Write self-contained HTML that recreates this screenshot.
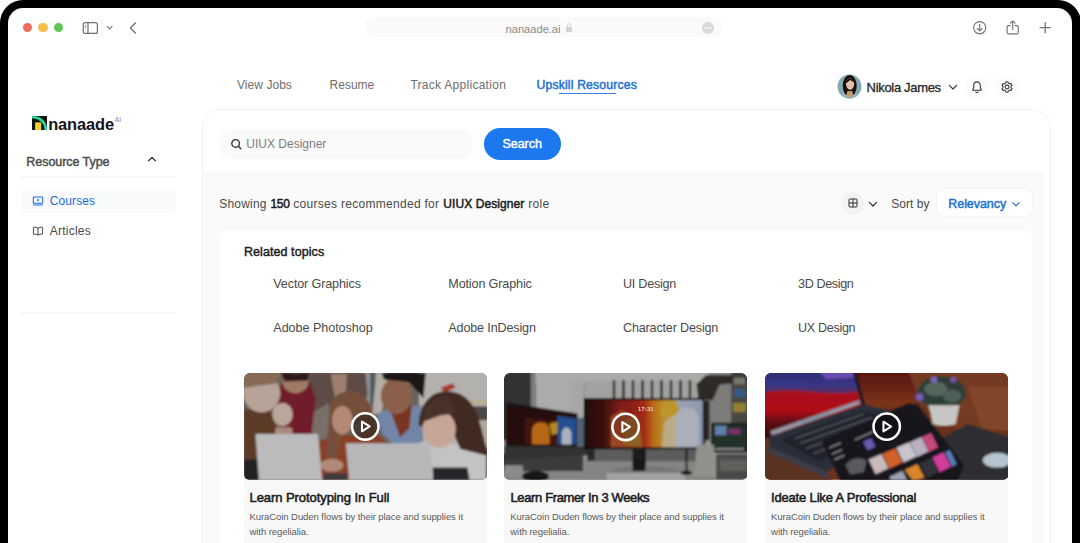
<!DOCTYPE html>
<html lang="en">
<head>
<meta charset="utf-8">
<title>nanaade.ai – Upskill Resources</title>
<style>
*{box-sizing:border-box;margin:0;padding:0}
html,body{width:1080px;height:543px;overflow:hidden;background:#fff}
body{position:relative;font-family:"Liberation Sans",sans-serif;font-size:12px;color:#222}
.abs{position:absolute}
.t{position:absolute;white-space:nowrap;line-height:1}
.frame{position:absolute;left:0;top:0;width:1081px;height:620px;background:#000;border-radius:23px}
.screen{position:absolute;left:8px;top:8px;width:1064px;height:620px;background:#fff;border-radius:15px;overflow:hidden}
/* everything inside .screen is positioned in page coordinates via this shim */
.page{position:absolute;left:-8px;top:-8px;width:1080px;height:543px}
.dot{position:absolute;width:9.2px;height:9.2px;border-radius:50%;top:23.3px}
.urlbar{left:366px;top:17px;width:355px;height:20px;border-radius:6px;background:#fafafa}
.nav{color:#6e6e6e;font-size:12px;top:79px}
.panel{left:202px;top:108.500px;width:849px;height:500px;border:1px solid #f2f2f2;border-radius:19px;background:#fff;overflow:hidden}
.greyarea{left:204px;top:172px;width:840px;height:400px;background:#fafafa}
.sh{top:198.100px;font-size:12px;color:#4a4a4a}
.shb{color:#1c1c1c;-webkit-text-stroke:0.500px #1c1c1c}
.topic{font-size:12.600px;color:#4a4a4a}
.card{position:absolute;top:373px;width:243px;height:200px;background:#f8f8f9;border-radius:6px;overflow:hidden}
.card svg{position:absolute;left:0;top:0}
.ctitle{font-size:13px;color:#1c1c1c;-webkit-text-stroke:0.550px #1c1c1c}
.cdesc{font-size:9.5px;color:#5a5a5a;letter-spacing:-0.07px}
</style>
</head>
<body>
<div class="frame"></div>
<div class="screen"><div class="page">

<!-- ===== browser chrome ===== -->
<div class="dot" style="left:23.2px;background:#ed6a5e"></div>
<div class="dot" style="left:38.4px;background:#f4bf4f"></div>
<div class="dot" style="left:53.5px;background:#61c554"></div>

<svg class="abs" style="left:80px;top:18px" width="64" height="20" viewBox="0 0 64 20" fill="none" stroke="#6f6f6f" stroke-width="1.2" stroke-linecap="round" stroke-linejoin="round">
  <rect x="3.2" y="4.6" width="14.2" height="10.8" rx="2"/>
  <line x1="8" y1="4.6" x2="8" y2="15.4"/>
  <line x1="5.4" y1="7.4" x2="5.4" y2="9.6" stroke-width="0.8"/>
  <line x1="22.2" y1="2" x2="22.2" y2="18" stroke="#ececec" stroke-width="1"/>
  <polyline points="27.2,8.4 29.6,10.8 32,8.4" stroke-width="1.1"/>
  <polyline points="55.4,5 50.4,10 55.4,15" stroke-width="1.3"/>
</svg>

<div class="abs urlbar"></div>
<div class="t" style="left:505.600px;top:23.500px;font-size:11.200px;color:#8a8a8a;letter-spacing:-0.050px">nanaade.ai</div>
<svg class="abs" style="left:564px;top:22px" width="10" height="12" viewBox="0 0 10 12">
  <rect x="2" y="5" width="6" height="5" rx="1" fill="#d2d2d2"/>
  <path d="M3.2 5.2V3.6a1.8 1.8 0 0 1 3.6 0V5.2" fill="none" stroke="#d2d2d2" stroke-width="1"/>
</svg>
<div class="abs" style="left:702px;top:21.6px;width:12px;height:12px;border-radius:50%;background:#d9d9d9"></div>
<div class="abs" style="left:705px;top:27px;width:1.6px;height:1.6px;border-radius:50%;background:#f6f6f6;box-shadow:2.4px 0 0 #f6f6f6,4.8px 0 0 #f6f6f6"></div>

<svg class="abs" style="left:970px;top:16px" width="90" height="24" viewBox="0 0 90 24" fill="none" stroke="#747474" stroke-width="1.15" stroke-linecap="round" stroke-linejoin="round">
  <circle cx="9.7" cy="11.7" r="6.1"/>
  <path d="M9.7 8.2v6.4M7.2 12.3l2.5 2.5 2.5-2.5"/>
  <path d="M40.4 9.6h-2.1a1.2 1.2 0 0 0-1.2 1.2v5.8a1.2 1.2 0 0 0 1.2 1.2h8.8a1.2 1.2 0 0 0 1.2-1.2v-5.8a1.2 1.2 0 0 0-1.2-1.2h-2.1"/>
  <path d="M42.7 13.6V5.2M40.4 7.2l2.3-2.3 2.3 2.3"/>
  <path d="M75.2 6.6v10.2M70.1 11.7h10.2" stroke-width="1.3"/>
</svg>

<!-- ===== top navigation ===== -->
<div class="t nav" style="left:237px;letter-spacing:0.05px">View Jobs</div>
<div class="t nav" style="left:329.6px">Resume</div>
<div class="t nav" style="left:410.4px;letter-spacing:0.28px">Track Application</div>
<div class="t nav" style="left:536.500px;top:78.700px;font-size:12.200px;color:#1b6fd6;letter-spacing:0.170px;-webkit-text-stroke:0.450px #1b6fd6">Upskill Resources</div>
<div class="abs" style="left:558.600px;top:92.800px;width:57px;height:1.100px;background:#3a80e0"></div>

<!-- user -->
<svg class="abs" style="left:836.500px;top:74.200px" width="25" height="25" viewBox="0 0 25 25">
  <defs><clipPath id="avc"><circle cx="12.5" cy="12.5" r="12"/></clipPath></defs>
  <g clip-path="url(#avc)">
    <rect width="25" height="25" fill="#86aab3"/>
    <path d="M3 25c0-4 3-6.500 9.500-6.500s9.500 2.500 9.500 6.500z" fill="#8fb6c6"/>
    <ellipse cx="12.700" cy="11.800" rx="7" ry="10.800" fill="#17110f"/>
    <path d="M10.500 17h4.600l1.400 4.500-3.700 3-3.700-3z" fill="#c49a70"/>
    <ellipse cx="13.100" cy="10" rx="4.100" ry="5.700" fill="#e2c0aa"/>
    <path d="M8.600 9.500c.5-4 4-6 6.500-4.500 1.500.5 2.300 2 2.500 4-1.500-1.500-3-2.500-4.500-3-1.500 1.500-3 2.500-4.500 3.500z" fill="#17110f"/>
    </g>
</svg>
<div class="t" style="left:866.6px;top:81px;font-size:13px;color:#262626;letter-spacing:-0.320px;-webkit-text-stroke:0.3px #262626">Nikola James</div>
<svg class="abs" style="left:946.400px;top:80px" width="14" height="14" viewBox="0 0 14 14" fill="none" stroke="#3a3a3a" stroke-width="1.2" stroke-linecap="round" stroke-linejoin="round"><polyline points="3.4,5.4 7,9 10.600,5.400"/></svg>
<div class="abs" style="left:965px;top:75px;width:24px;height:24px;border-radius:50%;background:#fbfbfb"></div>
<div class="abs" style="left:994.600px;top:75px;width:24px;height:24px;border-radius:50%;background:#fbfbfb"></div>
<svg class="abs" style="left:970px;top:80px" width="14" height="14" viewBox="0 0 14 14" fill="none" stroke="#3a3a3a" stroke-width="1.1" stroke-linecap="round" stroke-linejoin="round">
  <path d="M7 1.900c-2 0-3.300 1.500-3.300 3.500v2.500L2.700 9.700v.5h8.600v-.5l-1-1.800V5.400c0-2-1.300-3.500-3.300-3.500z"/><path d="M5.800 11.900a1.300 1.300 0 0 0 2.400 0"/>
</svg>
<svg class="abs" style="left:999.800px;top:80px" width="14" height="14" viewBox="0 0 14 14" fill="none" stroke="#3a3a3a" stroke-width="1.1" stroke-linejoin="round">
  <path d="M5.95 1.81 L8.05 1.81 L8.29 3.11 L9.73 3.94 L10.97 3.49 L12.02 5.31 L11.02 6.17 L11.02 7.83 L12.02 8.69 L10.97 10.51 L9.73 10.06 L8.29 10.89 L8.05 12.19 L5.95 12.19 L5.71 10.89 L4.27 10.06 L3.03 10.51 L1.98 8.69 L2.98 7.83 L2.98 6.17 L1.98 5.31 L3.03 3.49 L4.27 3.94 L5.71 3.11z"/>
  <circle cx="7" cy="7" r="1.900"/>
</svg>

<!-- ===== sidebar ===== -->
<svg class="abs" style="left:31.500px;top:116.400px" width="15.400" height="14" viewBox="0 0 15.400 14">
  <rect width="15.400" height="14" fill="#101410"/>
  <path d="M0 0H1.400A14 14 0 0 1 15.400 14H12.500A11.400 11.400 0 0 0 0 2.600z" fill="#2fd097"/>
  <rect x="3.100" y="6.400" width="6.100" height="7.600" fill="#f3d02c"/>
</svg>
<div class="t" style="left:48.200px;top:115.600px;font-size:16.400px;font-weight:bold;color:#14141c;letter-spacing:-0.1px">nanaade</div>
<div class="t" style="left:114.800px;top:116.800px;font-size:6.600px;color:#8a8a8a">AI</div>

<div class="t" style="left:26.300px;top:155.600px;font-size:12.500px;color:#4c4c4c;letter-spacing:-0.050px;-webkit-text-stroke:0.450px #4c4c4c">Resource Type</div>
<svg class="abs" style="left:145px;top:152px" width="14" height="14" viewBox="0 0 14 14" fill="none" stroke="#333" stroke-width="1.3" stroke-linecap="round" stroke-linejoin="round"><polyline points="3.600,8.800 7,5.400 10.400,8.800"/></svg>
<div class="abs" style="left:20.500px;top:175.800px;width:155.200px;height:2px;background:#f7f7f7"></div>

<div class="abs" style="left:20.500px;top:189px;width:155.200px;height:23.700px;border-radius:4px;background:#f9fafc"></div>
<svg class="abs" style="left:32px;top:195px" width="12" height="12" viewBox="0 0 12 12" fill="none" stroke="#1b6fd6" stroke-width="1.050" stroke-linejoin="round" stroke-linecap="round">
  <rect x="1.300" y="1.900" width="9.400" height="6.400" rx="0.800"/><path d="M1.600 9.900h8.800"/><path d="M5.200 3.800l2.200 1.300-2.200 1.300z" fill="#1b6fd6" stroke="none"/>
</svg>
<div class="t" style="left:49.800px;top:194.900px;font-size:12px;color:#1b6fd6;letter-spacing:0.080px">Courses</div>

<svg class="abs" style="left:32px;top:224.500px" width="12" height="12" viewBox="0 0 12 12" fill="none" stroke="#4a4a4a" stroke-width="1" stroke-linejoin="round" stroke-linecap="round">
  <path d="M6 3.200C5 2.300 3.400 2.100 1.400 2.300v6.900c2-.2 3.600 0 4.600.900 1-.900 2.600-1.100 4.600-.900V2.300C8.600 2.100 7 2.300 6 3.200zM6 3.200v6.900"/>
</svg>
<div class="t" style="left:49.800px;top:224.500px;font-size:12px;color:#4a4a4a;letter-spacing:0.220px">Articles</div>
<div class="abs" style="left:20.500px;top:311.800px;width:155.200px;height:2px;background:#f7f7f7"></div>

<!-- ===== main panel ===== -->
<div class="abs panel"></div>
<div class="abs greyarea"></div>

<div class="abs" style="left:220.400px;top:130.200px;width:251.800px;height:28.600px;border-radius:9px;background:#fafafb"></div>
<svg class="abs" style="left:230px;top:138px" width="12" height="12" viewBox="0 0 12 12" fill="none" stroke="#333" stroke-width="1.400" stroke-linecap="round"><circle cx="5.600" cy="5.400" r="3.800"/><path d="M8.300 8.300l2.500 2.500"/></svg>
<div class="t" style="left:246.300px;top:138.200px;font-size:12px;color:#7d7d7d">UIUX Designer</div>
<div class="abs" style="left:484.400px;top:128.300px;width:76.200px;height:31.500px;border-radius:16px;background:#1b78ee"></div>
<div class="t" style="left:502.500px;top:137.900px;font-size:12.500px;color:#fff;letter-spacing:-0.050px;-webkit-text-stroke:0.450px #fff">Search</div>

<div class="t sh" style="left:219.300px;letter-spacing:0.200px">Showing</div>
<div class="t sh shb" style="left:270.600px;letter-spacing:-0.400px">150</div>
<div class="t sh" style="left:293.300px;letter-spacing:0.290px">courses recommended for</div>
<div class="t sh shb" style="left:443.300px;letter-spacing:0.070px">UIUX Designer</div>
<div class="t sh" style="left:528.300px;letter-spacing:0.250px">role</div>

<div class="abs" style="left:841.300px;top:191.800px;width:23px;height:23px;border-radius:50%;background:#f2f2f3"></div>
<svg class="abs" style="left:847.800px;top:198.300px" width="10" height="10" viewBox="0 0 10 10" fill="none" stroke="#2a2a2a" stroke-width="1"><rect x="1" y="1" width="8" height="8" rx="0.900"/><path d="M5 1v8M1 5h8"/></svg>
<svg class="abs" style="left:866px;top:196.500px" width="14" height="14" viewBox="0 0 14 14" fill="none" stroke="#2f2f2f" stroke-width="1.200" stroke-linecap="round" stroke-linejoin="round"><polyline points="3.400,5.400 7,9 10.600,5.400"/></svg>
<div class="t" style="left:891.200px;top:197.700px;font-size:12px;color:#4a4a4a;letter-spacing:0.040px">Sort by</div>
<div class="abs" style="left:936.200px;top:188.200px;width:97.200px;height:29.200px;border-radius:8px;background:#fff;border:1px solid #f3f3f3"></div>
<div class="t" style="left:948.300px;top:197.500px;font-size:12.500px;color:#1b6fd6;letter-spacing:-0.060px;-webkit-text-stroke:0.450px #1b6fd6">Relevancy</div>
<svg class="abs" style="left:1009.200px;top:196.500px" width="14" height="14" viewBox="0 0 14 14" fill="none" stroke="#1b6fd6" stroke-width="1.100" stroke-linecap="round" stroke-linejoin="round"><polyline points="3.800,5.600 7,8.800 10.200,5.600"/></svg>

<!-- related topics card -->
<div class="abs" style="left:219.600px;top:229.800px;width:812.400px;height:340px;border-radius:7px;background:#fff"></div>
<div class="t" style="left:243.900px;top:246.100px;font-size:12.500px;color:#1c1c1c;letter-spacing:0.080px;-webkit-text-stroke:0.450px #1c1c1c">Related topics</div>
<div class="t topic" style="left:273.300px;top:277.900px;letter-spacing:-0.137px">Vector Graphics</div>
<div class="t topic" style="left:448.300px;top:277.900px;letter-spacing:-0.140px">Motion Graphic</div>
<div class="t topic" style="left:623px;top:277.900px;letter-spacing:-0.260px">UI Design</div>
<div class="t topic" style="left:798px;top:277.900px;letter-spacing:-0.370px">3D Design</div>
<div class="t topic" style="left:273.300px;top:321.500px;letter-spacing:-0.050px">Adobe Photoshop</div>
<div class="t topic" style="left:448.300px;top:321.500px;letter-spacing:-0.150px">Adobe InDesign</div>
<div class="t topic" style="left:623px;top:321.500px;letter-spacing:-0.175px">Character Design</div>
<div class="t topic" style="left:798px;top:321.500px;letter-spacing:-0.330px">UX Design</div>

<!-- course cards -->
<div class="card" style="left:243.600px" id="card1"><!--IMG1--><svg width="243.200" height="106.800" viewBox="15.500 20.700 1050 462" preserveAspectRatio="none">
<defs><filter id="b1" x="-5%" y="-5%" width="110%" height="110%"><feGaussianBlur stdDeviation="5"/></filter>
<clipPath id="c1"><rect x="15.500" y="20.700" width="1050" height="462" rx="22"/></clipPath></defs>
<g clip-path="url(#c1)">
<rect x="0" y="0" width="1100" height="500" fill="#6d625c"/>
<g filter="url(#b1)">
  <!-- background wall / window -->
  <rect x="520" y="10" width="110" height="150" fill="#8f9496"/>
  <rect x="560" y="10" width="22" height="150" fill="#4f5b60"/>
  <path d="M590 20h50l-10 60-20 110-40 10 10-110z" fill="#b5ada5"/>
  <rect x="770" y="10" width="310" height="330" fill="#b3b1ae"/>
  <rect x="960" y="140" width="110" height="18" fill="#b8ac8e"/>
  <rect x="970" y="165" width="100" height="60" fill="#4b4744"/>
  <rect x="1000" y="230" width="70" height="110" fill="#b3a89c"/>
  <path d="M865 85l50-20 15 18-50 22z" fill="#a8342c"/>
  <!-- man behind in jacket -->
  <path d="M300 20h240l10 90-40 120-110 60-110-10z" fill="#5f4c44"/>
  <path d="M390 25h70l-6 95-44 20z" fill="#9d7f70"/>
  <path d="M300 200l80-50 20 150-100 10z" fill="#7a6e69"/>
  <!-- boy in red -->
  <path d="M150 110l40-60 110 10 25 70-20 170-120 10z" fill="#6f1f2a"/>
  <ellipse cx="238" cy="62" rx="55" ry="46" fill="#a17a66"/>
  <path d="M178 20h120l-8 34-100 4z" fill="#2e1f1a"/>
  <!-- left boy -->
  <path d="M15 180l110-10 40 110-60 20-40 110-50 10z" fill="#5b3a27"/>
  <ellipse cx="92" cy="108" rx="80" ry="84" fill="#b8a398"/>
  <path d="M15 20h155l-14 46-141 18z" fill="#866a54"/>
  <ellipse cx="182" cy="200" rx="44" ry="50" fill="#bba69c"/>
  <rect x="150" y="255" width="75" height="40" rx="14" fill="#a88c7e"/>
  <rect x="15" y="395" width="70" height="90" fill="#232323"/>
  <!-- dark-skinned girl -->
  <path d="M585 200l60-30 140-10 5 170-120 10-60-60z" fill="#7186a6"/>
  <path d="M650 190l90-30-10 100-40 40z" fill="#7a3623"/>
  <ellipse cx="672" cy="120" rx="66" ry="78" fill="#8a604c"/>
  <path d="M610 20h190l-10 110-60-70-110-10z" fill="#1d1716"/>
  <!-- centre girl -->
  <path d="M340 320l60-30h200l40 50-30 140H345z" fill="#8a4027"/>
  <path d="M385 190c0-60 40-90 90-90s90 40 95 100l20 110-60-20-20-80-60-30-20 130-20 90-40-20z" fill="#74503a"/>
  <ellipse cx="440" cy="225" rx="44" ry="62" fill="#b48a76"/>
  <ellipse cx="395" cy="420" rx="50" ry="28" fill="#b08a78"/>
  <!-- right girl -->
  <path d="M700 340l120-30 240 40v135H700z" fill="#c4c2c2"/>
  <path d="M830 430h150l10 55H830z" fill="#26282c"/>
  <path d="M770 250c0-90 50-150 120-150 90 0 130 70 150 160l30 120-120-30-40-90z" fill="#3f2a22"/>
  <ellipse cx="858" cy="264" rx="72" ry="80" fill="#c6a696"/>
  <path d="M782 235c10-70 50-110 110-120l40 80-70 10z" fill="#49312a"/>
  <!-- laptops -->
  <path d="M65 285h270l18 200H80z" fill="#bbbbbe"/>
  <path d="M455 325h365l12 160H470z" fill="#b7b7ba"/>
  <rect x="360" y="455" width="100" height="30" fill="#3d3a3a"/>
</g>
<!-- play button -->
<circle cx="539" cy="252" r="57" fill="rgba(40,28,22,0.55)" stroke="#fff" stroke-width="11"/>
<path d="M525 231v42l33-21z" fill="none" stroke="#fff" stroke-width="9" stroke-linejoin="round"/>
</g>
</svg>
<!--/IMG1--></div>
<div class="card" style="left:504.400px" id="card2"><!--IMG2--><svg width="243.200" height="106.800" viewBox="19 20.700 1050 462" preserveAspectRatio="none">
<defs><filter id="b2" x="-5%" y="-5%" width="110%" height="110%"><feGaussianBlur stdDeviation="4"/></filter>
<clipPath id="c2"><rect x="19" y="20.700" width="1050" height="462" rx="22"/></clipPath>
<linearGradient id="scr2" x1="0" x2="1" y1="0" y2="0">
<stop offset="0" stop-color="#2c0f0e"/><stop offset="0.160" stop-color="#4a1412"/><stop offset="0.270" stop-color="#8c1f16"/><stop offset="0.400" stop-color="#a8261a"/><stop offset="0.500" stop-color="#bf341c"/><stop offset="0.580" stop-color="#d8801e"/><stop offset="0.680" stop-color="#d9ac38"/><stop offset="0.760" stop-color="#b9c0cf"/><stop offset="1" stop-color="#a3b2cc"/></linearGradient>
</defs>
<g clip-path="url(#c2)">
<rect x="0" y="0" width="1100" height="500" fill="#a6a6a4"/>
<g filter="url(#b2)">
  <rect x="140" y="10" width="760" height="50" fill="#c6c6c4"/>
  <rect x="160" y="40" width="200" height="165" fill="#c9c9c7"/>
  <rect x="300" y="55" width="60" height="160" fill="#c2c2c0"/>
  <rect x="370" y="55" width="480" height="80" fill="#bdbdbb"/>
  <!-- window blind -->
  <rect x="10" y="10" width="125" height="300" fill="#3b3b3b"/>
  <rect x="135" y="10" width="20" height="300" fill="#8e8e8c"/>
  <!-- pegboard right -->
  <rect x="890" y="40" width="120" height="200" fill="#91918d"/>
  <rect x="1000" y="10" width="80" height="230" fill="#55524a"/>
  <path d="M850 70l40-40h190v30l-130 10-30 70-60-10z" fill="#35322f"/>
  <rect x="1012" y="90" width="50" height="36" fill="#3f6a9a"/>
  <rect x="1008" y="150" width="55" height="40" fill="#a8963f"/>
  <rect x="1010" y="40" width="50" height="30" fill="#8a8a80"/>
  <rect x="872" y="140" width="34" height="170" fill="#2c2c2c"/>
  <!-- slats -->
  <g fill="#151515"><rect x="489" y="52" width="10" height="85"/><rect x="530" y="52" width="10" height="85"/><rect x="571" y="52" width="10" height="85"/><rect x="612" y="52" width="10" height="85"/><rect x="653" y="52" width="10" height="85"/><rect x="694" y="52" width="10" height="85"/><rect x="735" y="52" width="10" height="85"/><rect x="776" y="52" width="10" height="85"/><rect x="817" y="52" width="10" height="85"/></g>
  <!-- desk -->
  <rect x="10" y="392" width="1070" height="100" fill="#9a9a98"/>
  <rect x="380" y="350" width="500" height="52" fill="#6a6a6a"/>
  <rect x="10" y="370" width="350" height="75" fill="#454547"/>
  <rect x="20" y="420" width="80" height="50" fill="#a4a4a6"/>
  <ellipse cx="155" cy="468" rx="58" ry="24" fill="#161616"/>
  <!-- left laptop -->
  <path d="M28 148l308 48v150H28z" fill="#1e1716"/>
  <path d="M34 160l296 44v126H34z" fill="#2e100f"/>
  <path d="M110 215l140 12v103H110z" fill="#4f1b12"/>
  <path d="M140 330v-60c0-48 76-48 76 0v60z" fill="#d47a1c"/>
  <path d="M215 240l40-10v50l-30 10z" fill="#cf9f2a"/>
  <path d="M250 206l80 12v112h-80z" fill="#2a5aa8"/>
  <path d="M268 330v-44c0-40 42-40 42 0v44z" fill="#c9cfdc"/>
  <path d="M22 338h350l26 36-376 22z" fill="#3a3a3c"/>
  <rect x="338" y="214" width="32" height="120" fill="#5f7088"/>
  <!-- centre monitor -->
  <rect x="364" y="129" width="522" height="222" fill="#141414"/>
  <rect x="373" y="138" width="504" height="204" fill="url(#scr2)"/>
  <path d="M480 342V210l50-30 50 50 40 112z" fill="#b5522a"/><path d="M535 330l10-110 40-20 20 60 10 80z" fill="#a8742c"/>
  <path d="M690 200l20-60 50 0 20 50-40 30z" fill="#dcae30"/>
  <path d="M700 342l10-110 60-40 10 150z" fill="#d9c89a"/>
  <path d="M760 342v-120c0-70 100-70 100 0v120z" fill="#c6ccd9"/>
  <!-- stand -->
  <rect x="574" y="350" width="58" height="95" fill="#1f1f1f"/>
  <ellipse cx="630" cy="448" rx="150" ry="24" fill="#8a8a8a"/>
  <rect x="575" y="395" width="54" height="50" fill="#181818"/>
  <rect x="462" y="452" width="340" height="40" fill="#bdbdbd"/>
  <rect x="380" y="350" width="30" height="50" fill="#2c2c2c"/>
  <!-- lamp stand -->
  <rect x="803" y="350" width="8" height="100" fill="#1a1a1a"/>
  <ellipse cx="806" cy="452" rx="25" ry="9" fill="#1a1a1a"/>
  <!-- right stuff -->
  <rect x="914" y="236" width="160" height="128" fill="#1c221e"/>
  <rect x="926" y="246" width="140" height="100" fill="#2a3a34"/>
  <rect x="930" y="248" width="50" height="42" fill="#6f92c4"/>
  <rect x="990" y="262" width="50" height="24" fill="#8a3a7a"/>
  <rect x="930" y="345" width="125" height="9" fill="#9a9a9a"/>
  <path d="M852 330h72l14 140h-100z" fill="#a9a9a2"/>
  <rect x="935" y="372" width="145" height="110" fill="#565654"/>
  <rect x="950" y="395" width="120" height="50" fill="#6f6f6c"/>
<rect x="0" y="0" width="1100" height="500" fill="#000" opacity="0.140"/>
</g>
<text x="597" y="186" font-family="Liberation Sans, sans-serif" font-size="27" font-weight="bold" fill="#e9d6cf" opacity="0.900">17:31</text>
<circle cx="544" cy="254" r="57" fill="rgba(90,30,20,0.350)" stroke="#fff" stroke-width="11"/>
<path d="M530 233v42l33-21z" fill="none" stroke="#fff" stroke-width="9" stroke-linejoin="round"/>
</g>
</svg>
<!--/IMG2--></div>
<div class="card" style="left:765.200px" id="card3"><!--IMG3--><svg width="243.200" height="106.800" viewBox="22.500 20.700 1050 462" preserveAspectRatio="none">
<defs><filter id="b3" x="-5%" y="-5%" width="110%" height="110%"><feGaussianBlur stdDeviation="4"/></filter>
<clipPath id="c3"><rect x="22.500" y="20.700" width="1050" height="462" rx="22"/></clipPath>
<linearGradient id="scr3" x1="0" x2="0" y1="0" y2="1"><stop offset="0" stop-color="#2c2c70"/><stop offset="0.200" stop-color="#3a3284"/><stop offset="0.300" stop-color="#a8121c"/><stop offset="0.600" stop-color="#b01018"/><stop offset="0.780" stop-color="#5a0c12"/><stop offset="1" stop-color="#2e090d"/></linearGradient>
<linearGradient id="glow3" x1="0" x2="0" y1="0" y2="1"><stop offset="0" stop-color="#581611"/><stop offset="0.500" stop-color="#6a2414"/><stop offset="1" stop-color="#803816"/></linearGradient>
</defs>
<g clip-path="url(#c3)">
<rect x="0" y="0" width="1100" height="500" fill="#6a321d"/>
<g filter="url(#b3)">
  <!-- table glow -->
  <path d="M400 10h300l-40 150-220 10z" fill="url(#glow3)"/>
  <path d="M640 10h440v260l-200 10-180-120z" fill="#743a20"/><path d="M900 80h180v190l-120 -10z" fill="#82462a"/>
  <path d="M10 330l300 140v30H10z" fill="#5a3020"/>
  <!-- laptop screen -->
  <path d="M10 10h395l45 145L40 300 10 300z" fill="url(#scr3)"/>
  <path d="M250 10h150l8 30-120 8z" fill="#6a4cb2"/>
  <path d="M10 60c120-30 260 30 410 0l10 40c-150 30-290-30-420 10z" fill="#2f3a8a" opacity="0.700"/>
  <path d="M45 272l385-135 6 16L52 292z" fill="#8a8a9a"/>
  <path d="M400 10l16 0 40 150-16 6z" fill="#1a1a20"/>
  <!-- laptop base -->
  <path d="M40 300l410-145 160 45-320 250-250-110z" fill="#2b2f3b"/>
  <path d="M90 310l350-125 110 30-290 190z" fill="#20222a"/>
  <path d="M40 340l250 110 10 30-270-120z" fill="#3a3e4a"/>
  <g stroke="#5b5f6b" stroke-width="7" fill="none" opacity="0.800"><path d="M150 305l300-108"/><path d="M175 325l310-112"/><path d="M200 347l320-116"/><path d="M230 370l310-118"/></g>
  <g stroke-width="5" fill="none" opacity="0.750"><path d="M60 278l120-42" stroke="#c9a9b9"/><path d="M180 236l120-42" stroke="#6fa8b8"/><path d="M300 194l120-42" stroke="#b4b4c4"/></g>
  <!-- felt mat -->
  <path d="M770 310l130-70 180 60v200H870z" fill="#2d2d30"/>
  <!-- tablet -->
  <path d="M268 318l375-168 40 10 200 260-30 70H350z" fill="#18181b"/>
  <path d="M446 318l34-15 20 36-34 17z" fill="#6a5ab0"/>
  <g>
   <path d="M470 395l56-24 30 62-56 26z" fill="#c9b9b9"/>
   <path d="M530 370l56-24 30 62-56 26z" fill="#d2602a"/>
   <path d="M590 344l56-24 30 62-56 26z" fill="#c8c4cc"/>
   <path d="M648 320l50-22 30 62-50 24z" fill="#b9b0c4"/>
   <path d="M700 298l40-18 30 62-40 20z" fill="#c44a7a"/>
   <path d="M560 470l56-26 20 40h-70z" fill="#9aa0b0"/>
   <path d="M625 440l56-26 30 60-50 12z" fill="#d8842a"/>
   <path d="M690 412l50-24 32 62-50 24z" fill="#30303a"/>
   <path d="M745 386l48-22 32 62-48 24z" fill="#d03c9c"/>
   <path d="M800 364l20-10 30 60-20 12z" fill="#5a7ab8"/>
  </g>
  <path d="M370 420c20-30 60-40 90-20l-10 50-60 10z" fill="#5a5a5e"/><g stroke="#8a8a90" stroke-width="6" fill="none"><path d="M300 345l50-22"/><path d="M312 372l44-20"/><path d="M322 396l44-20"/><path d="M410 310l80-36"/></g>
  <!-- plant -->
  <ellipse cx="785" cy="105" rx="105" ry="70" fill="#2f3e38"/>
  <ellipse cx="760" cy="90" rx="50" ry="30" fill="#55665e"/>
  <ellipse cx="830" cy="120" rx="40" ry="28" fill="#4d5f57"/>
  <circle cx="690" cy="125" r="17" fill="#7a5cb4"/>
  <circle cx="752" cy="50" r="14" fill="#7e62b8"/>
  <circle cx="835" cy="50" r="13" fill="#7258a8"/>
  <path d="M728 160h134l-16 80c-20 14-80 14-100 0z" fill="#c6c6c2"/>
  <!-- mouse -->
  <ellipse cx="1025" cy="398" rx="62" ry="32" fill="#b4c4d0"/>
</g>
<circle cx="548" cy="252.500" r="57" fill="rgba(15,15,18,0.550)" stroke="#fff" stroke-width="11"/>
<path d="M534 231.500v42l33-21z" fill="none" stroke="#fff" stroke-width="9" stroke-linejoin="round"/>
</g>
</svg>
<!--/IMG3--></div>

<div class="t ctitle" style="left:249.500px;top:490.800px;letter-spacing:-0.070px">Learn Prototyping In Full</div>
<div class="t cdesc" style="left:249.500px;top:512.300px">KuraCoin Duden flows by their place and supplies it</div>
<div class="t cdesc" style="left:249.500px;top:527.100px">with regelialia.</div>

<div class="t ctitle" style="left:510.500px;top:490.800px;letter-spacing:-0.370px">Learn Framer In 3 Weeks</div>
<div class="t cdesc" style="left:510.300px;top:512.300px">KuraCoin Duden flows by their place and supplies it</div>
<div class="t cdesc" style="left:510.300px;top:527.100px">with regelialia.</div>

<div class="t ctitle" style="left:771px;top:490.800px;letter-spacing:-0.170px">Ideate Like A Professional</div>
<div class="t cdesc" style="left:771.100px;top:512.300px">KuraCoin Duden flows by their place and supplies it</div>
<div class="t cdesc" style="left:771.100px;top:527.100px">with regelialia.</div>

</div></div>
</body>
</html>
